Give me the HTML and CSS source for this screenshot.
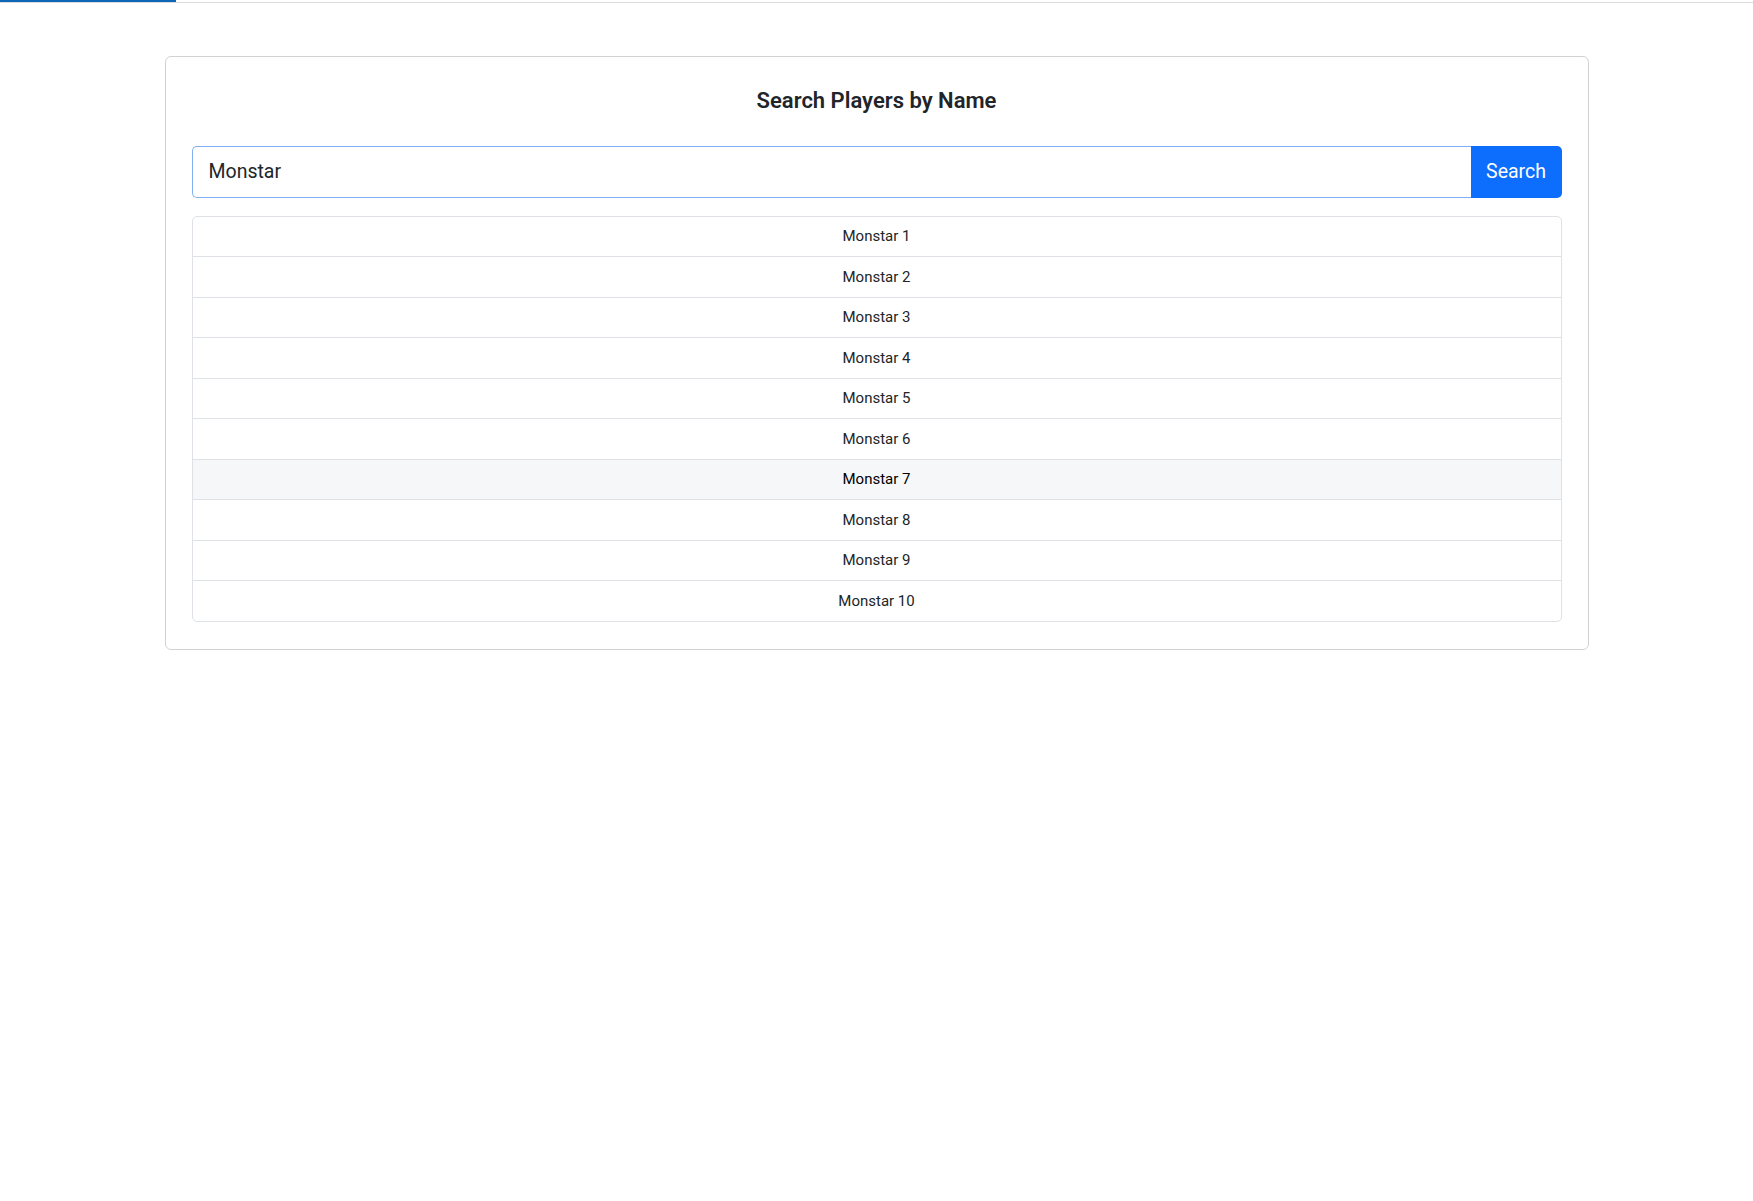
FILE: index.html
```html
<!DOCTYPE html>
<html lang="en">
<head>
<meta charset="utf-8">
<title>Search Players by Name</title>
<link rel="stylesheet" href="styles.css">
</head>
<body>
<div class="progress"><div class="progress-fill"></div></div>
<main class="card">
  <h1 class="title">Search Players by Name</h1>
  <form class="search-group">
    <input class="search-input" type="text" value="Monstar">
    <button class="search-btn" type="button">Search</button>
  </form>
  <ul class="results">
    <li class="result">Monstar 1</li>
    <li class="result">Monstar 2</li>
    <li class="result">Monstar 3</li>
    <li class="result">Monstar 4</li>
    <li class="result">Monstar 5</li>
    <li class="result">Monstar 6</li>
    <li class="result result-hover">Monstar 7</li>
    <li class="result">Monstar 8</li>
    <li class="result">Monstar 9</li>
    <li class="result">Monstar 10</li>
  </ul>
</main>
</body>
</html>
```

FILE: styles.css
```css
* { box-sizing: border-box; }
html, body { margin: 0; padding: 0; background: #fff; }
body {
  font-family: Roboto, "Liberation Sans", Arial, sans-serif;
  color: #212529;
}
.progress {
  height: 3px;
  border-bottom: 1px solid #dcdcdc;
}
.progress-fill {
  width: 176px;
  height: 2px;
  background: #0d65b8;
}
.card {
  width: 1424px;
  margin: 52.6px auto 0;
  border: 1px solid #d2d2d2;
  border-radius: 6px;
  padding: 26px 26px 27px;
}
.title {
  margin: 0 0 28px;
  font-size: 22px;
  line-height: 35px;
  font-weight: 600;
  text-align: center;
  color: #212529;
}
.search-group {
  display: flex;
  height: 52px;
  margin: 0 0 18px;
}
.search-input {
  flex: 1;
  min-width: 0;
  height: 52px;
  border: 1px solid #7fb0f5;
  border-right: none;
  border-radius: 5px 0 0 5px;
  padding: 0 16px;
  font-family: inherit;
  font-size: 19.5px;
  color: #212529;
  outline: none;
}
.search-btn {
  width: 91px;
  height: 52px;
  border: none;
  border-radius: 0 5px 5px 0;
  background: #0d6efd;
  color: #fff;
  font-family: inherit;
  font-size: 19.5px;
  padding: 0;
  cursor: pointer;
}
.results {
  list-style: none;
  margin: 0;
  padding: 0;
  border: 1px solid #dee2e6;
  border-radius: 5px;
  overflow: hidden;
}
.result {
  padding: 7.75px 16px;
  line-height: 24px;
  font-size: 15px;
  text-align: center;
  color: #212529;
  border-top: 1px solid #dee2e6;
}
.result:first-child { border-top: none; }
.result-hover {
  background: #f6f7f9;
  color: #000;
}
```
